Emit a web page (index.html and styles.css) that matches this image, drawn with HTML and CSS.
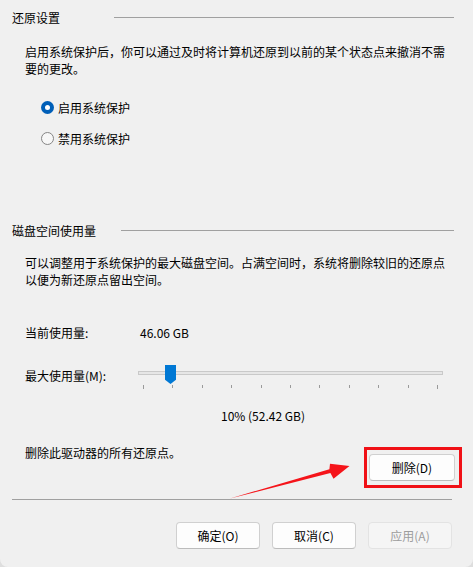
FILE: index.html
```html
<!DOCTYPE html>
<html lang="zh-CN">
<head>
<meta charset="utf-8">
<title>系统保护</title>
<link rel="stylesheet" href="styles.css">
</head>
<body>
<div class="dialog">
  <div class="group-head g1"><span class="title">还原设置</span><span class="rule"></span></div>
  <p class="desc">启用系统保护后，你可以通过及时将计算机还原到以前的某个状态点来撤消不需要的更改。</p>
  <div class="radios">
    <label class="radio-row"><span class="radio checked"></span><span>启用系统保护</span></label>
    <label class="radio-row second"><span class="radio"></span><span>禁用系统保护</span></label>
  </div>

  <div class="group-head g2"><span class="title">磁盘空间使用量</span><span class="rule"></span></div>
  <p class="desc desc2">可以调整用于系统保护的最大磁盘空间。占满空间时，系统将删除较旧的还原点以便为新还原点留出空间。</p>

  <div class="usage-row"><span class="label">当前使用量:</span><span class="value">46.06 GB</span></div>

  <div class="slider-row">
    <span class="label slider-label">最大使用量(M):</span>
    <div class="slider">
      <div class="track"></div>
      <div class="thumb"></div>
      <div class="ticks">
        <span class="tick long"></span><span class="tick"></span><span class="tick"></span><span class="tick"></span><span class="tick"></span><span class="tick"></span><span class="tick"></span><span class="tick"></span><span class="tick"></span><span class="tick"></span><span class="tick long"></span>
      </div>
    </div>
  </div>

  <div class="percent">10% (52.42 GB)</div>

  <div class="delete-row">
    <span class="delete-text">删除此驱动器的所有还原点。</span>
    <button class="btn btn-delete">删除(D)</button>
  </div>

  <div class="separator"></div>

  <div class="actions">
    <button class="btn">确定(O)</button>
    <button class="btn">取消(C)</button>
    <button class="btn disabled">应用(A)</button>
  </div>

  <div class="highlight"></div>
  <svg class="arrow" width="473" height="567" viewBox="0 0 473 567">
    <polygon points="230,498.5 330.4,473 333.5,478.8 349.5,466 330,463.8 329.4,469.2" fill="#f5141a"/>
  </svg>
</div>
</body>
</html>
```

FILE: styles.css
```css
html {
  background: #dedede;
}

body {
  margin: 0;
  font-family: "Noto Sans CJK SC", "Microsoft YaHei", sans-serif;
  font-size: 12px;
  line-height: 17px;
  color: #000000;
}

.dialog {
  position: relative;
  width: 473px;
  height: 567px;
  box-sizing: border-box;
  padding: 7px 19px 0 12px;
  background: #f0f0f0;
  border-radius: 0 0 8px 8px;
  overflow: hidden;
}

.group-head {
  display: flex;
  align-items: center;
  height: 20px;
}

.rule {
  flex: 1;
  height: 1px;
  background: #a0a0a0;
}

.g1 .rule {
  margin-left: 54px;
}

.g2 {
  margin-top: 72px;
}

.g2 .rule {
  margin-left: 25px;
}

.desc {
  margin: 16px 0 0 13px;
}

.desc2 {
  margin-top: 14px;
}

.radios {
  margin: 20px 0 0 29px;
  display: flex;
  flex-direction: column;
}

.radio-row {
  display: flex;
  align-items: center;
  gap: 4px;
  height: 20px;
}

.radio-row.second {
  margin-top: 11px;
}

.radio {
  width: 13px;
  height: 13px;
  box-sizing: border-box;
  border-radius: 50%;
  border: 1px solid #858585;
  background: #f7f7f7;
  position: relative;
}

.radio.checked {
  border: none;
  background: #005fb8;
}

.radio.checked::after {
  content: "";
  position: absolute;
  left: 4px;
  top: 4px;
  width: 5px;
  height: 5px;
  border-radius: 50%;
  background: #ffffff;
}

.usage-row {
  display: flex;
  align-items: center;
  height: 20px;
  margin: 34px 0 0 13px;
}

.label {
  width: 115px;
  flex: none;
}

.slider-row {
  display: flex;
  align-items: flex-start;
  margin: 23px 0 0 13px;
}

.slider-label {
  width: 113px;
  margin-top: 2px;
}

.slider {
  position: relative;
  width: 305px;
  height: 24px;
}

.track {
  margin-top: 6px;
  height: 4px;
  box-sizing: border-box;
  border: 1px solid #c9c9c9;
  background: #e6e6e6;
}

.thumb {
  position: absolute;
  left: 27px;
  top: 0;
  width: 11px;
  height: 19px;
  background: #0078d4;
  clip-path: polygon(0 0, 100% 0, 100% 78%, 50% 100%, 0 78%);
}

.ticks {
  display: flex;
  justify-content: space-between;
  align-items: flex-start;
  padding: 0 5px;
  margin-top: 10px;
}

.tick {
  width: 1px;
  height: 3px;
  background: #9a9a9a;
}

.tick.long {
  height: 4px;
}

.percent {
  margin: 18px 0 0 60px;
  text-align: center;
}

.delete-row {
  display: flex;
  justify-content: space-between;
  align-items: flex-start;
  margin: 20px -1px 0 13px;
}

.btn {
  width: 84px;
  height: 27px;
  padding: 0;
  box-sizing: border-box;
  border: 1px solid #d0d0d0;
  border-bottom-color: #bcbcbc;
  border-radius: 4px;
  background: #fdfdfd;
  font-family: inherit;
  font-size: 12px;
  color: #000000;
}

.btn-delete {
  width: 86px;
  margin-top: 10px;
}

.btn.disabled {
  background: #f5f5f5;
  border-color: #e3e3e3;
  color: #9d9d9d;
}

.separator {
  height: 1px;
  background: #a0a0a0;
  margin: 18px 2px 0 0;
}

.actions {
  display: flex;
  justify-content: flex-end;
  gap: 12px;
  margin: 22px 2px 0 0;
}

.highlight {
  position: absolute;
  left: 364px;
  top: 447px;
  width: 98px;
  height: 41px;
  box-sizing: border-box;
  border: 3px solid #f01016;
}

.arrow {
  position: absolute;
  left: 0;
  top: 0;
  pointer-events: none;
}
```
